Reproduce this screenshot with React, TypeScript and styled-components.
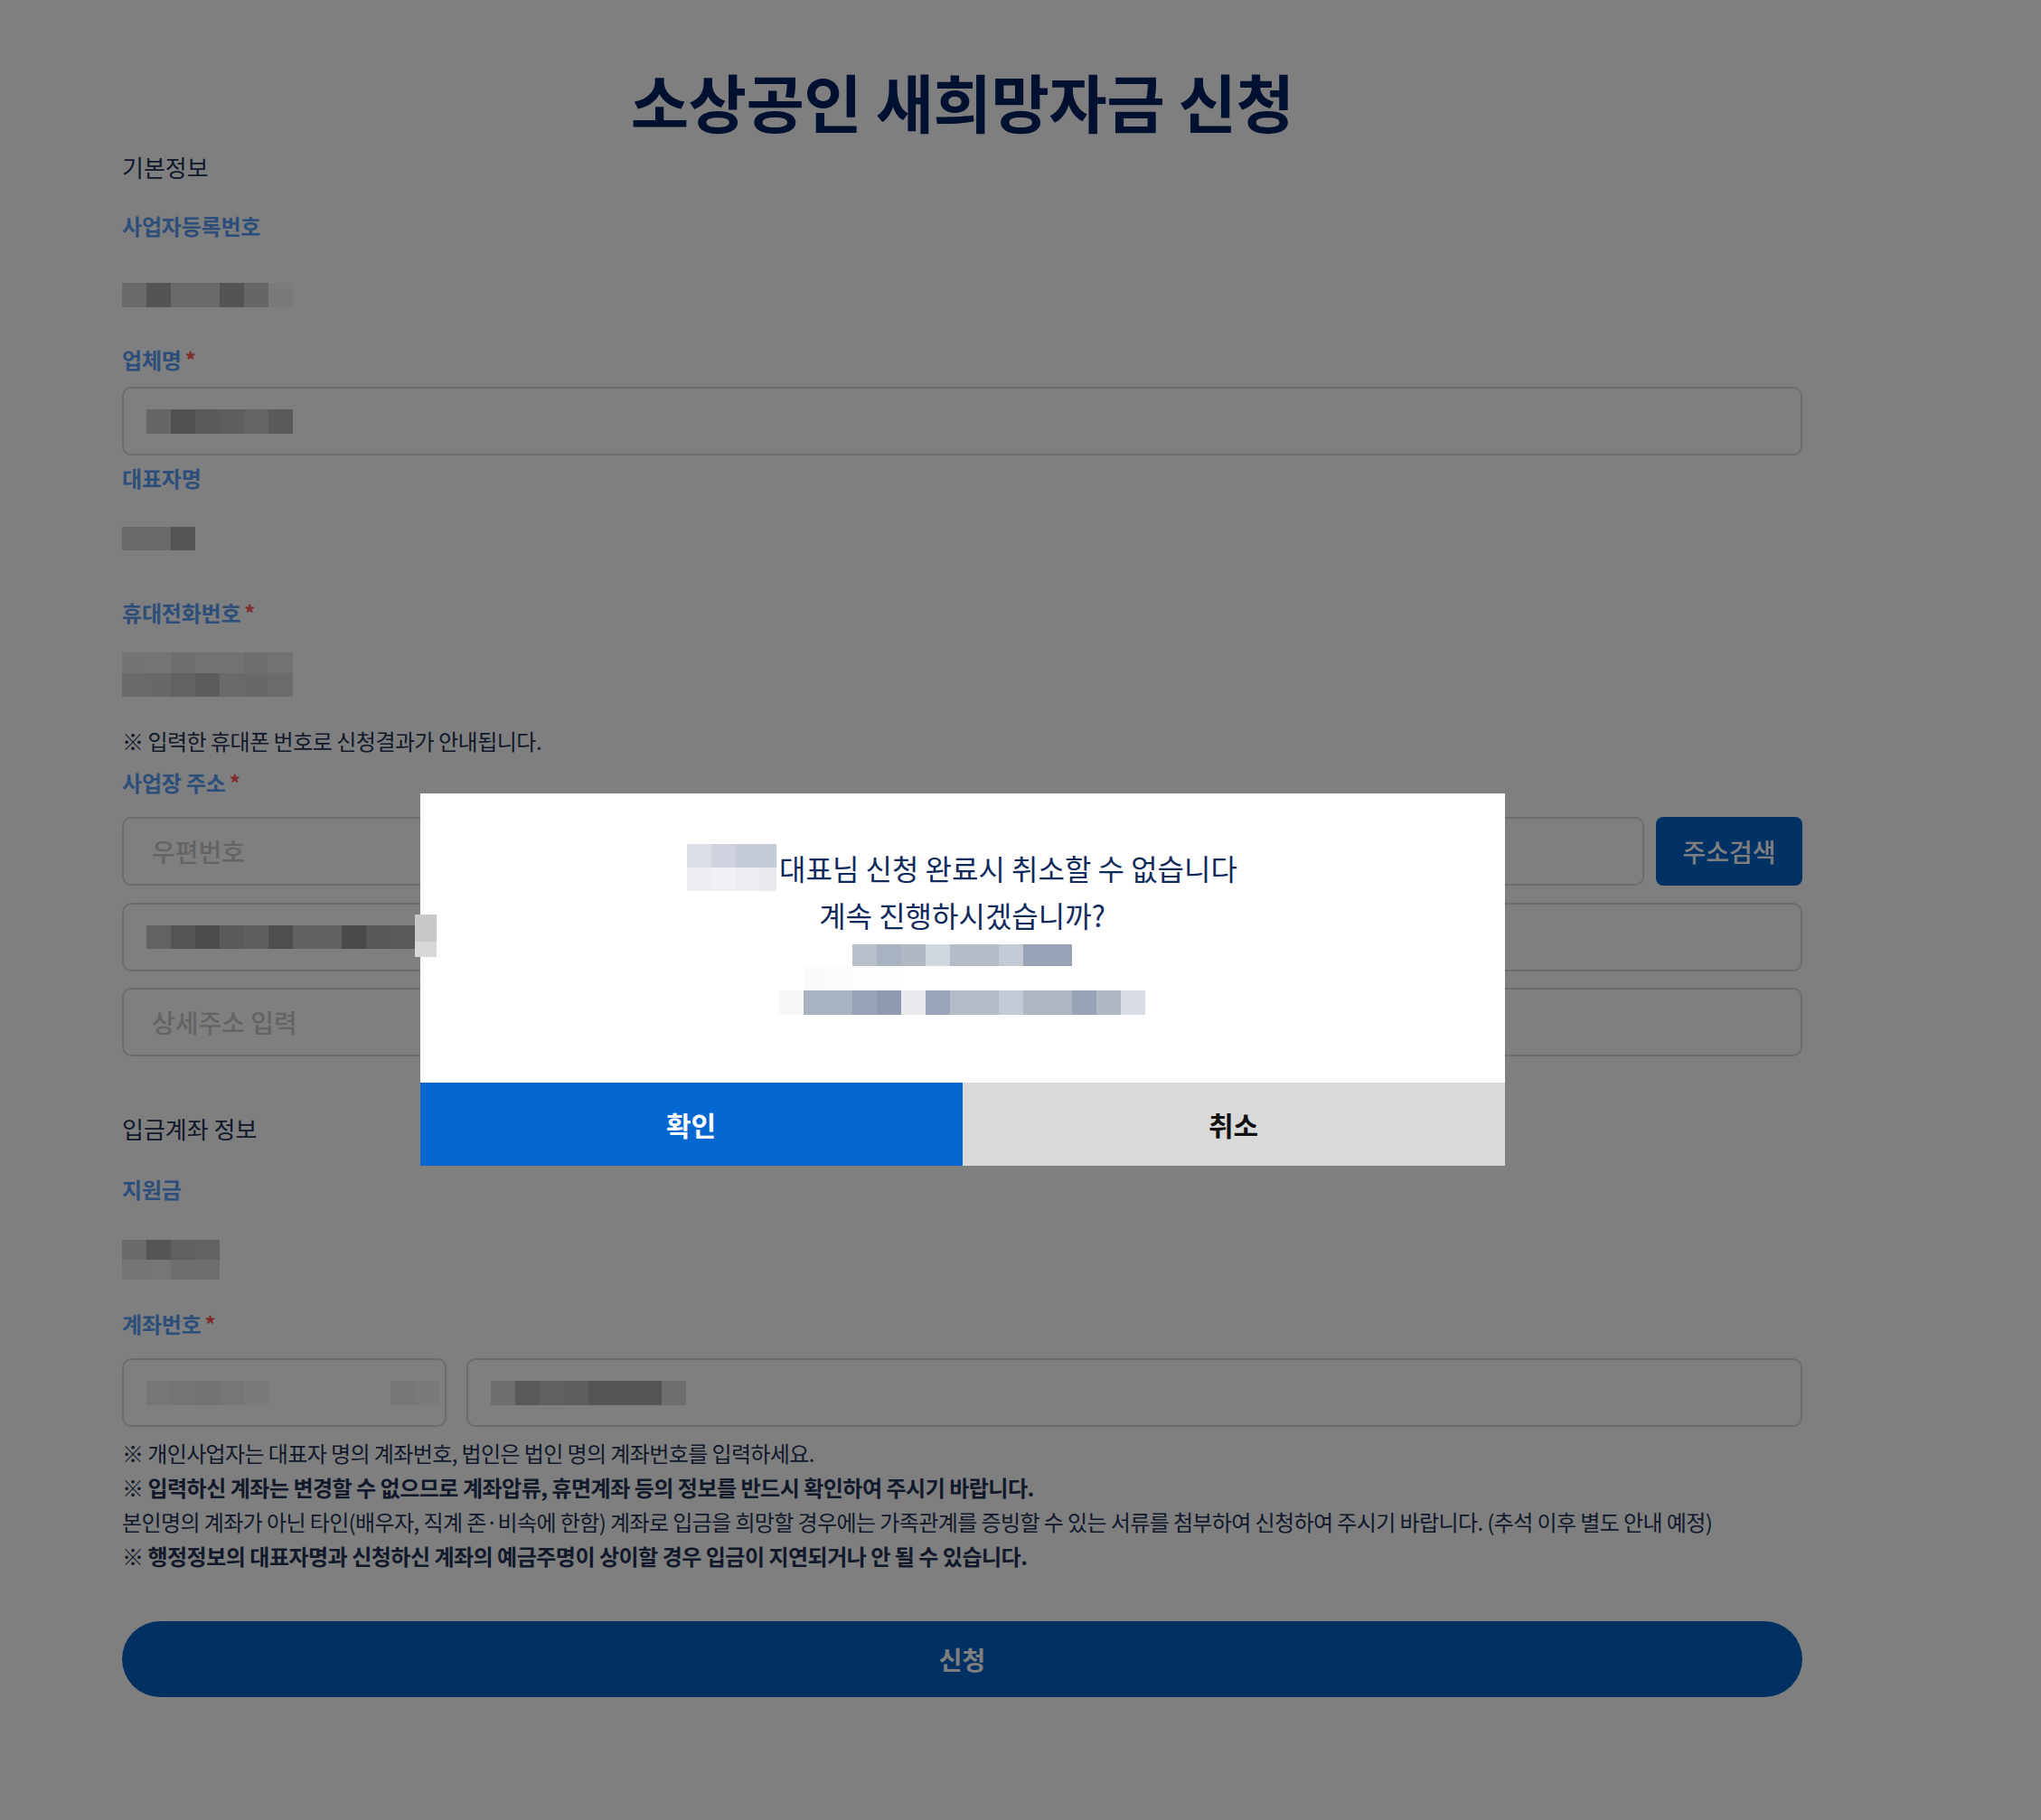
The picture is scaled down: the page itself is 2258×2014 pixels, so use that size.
import React from "react";
import styled, { createGlobalStyle } from "styled-components";

const GlobalStyle = createGlobalStyle`
  html, body {
    margin: 0;
    padding: 0;
  }
  body {
    background: #fff;
    font-family: "Noto Sans CJK KR", "Noto Sans", sans-serif;
    color: #223355;
  }
  * {
    box-sizing: border-box;
  }
`;

// grey level as seen under the 50% dim -> the page colour beneath it
const dim = (v: number) => {
    const c = Math.min(255, v * 2);
    return `rgb(${c}, ${c}, ${c})`;
};

const Page = styled.main`
    width: 2258px;
    min-height: 2014px;
    padding: 70px 0 0 135px;
    background: #fff;
`;

const Form = styled.form`
    width: 1859px;
    display: flex;
    flex-direction: column;
`;

const Title = styled.h1`
    margin: 0;
    text-align: center;
    font-size: 70px;
    line-height: 84px;
    font-weight: 700;
    letter-spacing: -0.5px;
    color: #002060;
`;

const SectionTitle = styled.h2<{ $top: number }>`
    margin: ${p => p.$top}px 0 0;
    font-size: 26px;
    line-height: 34px;
    font-weight: 400;
    letter-spacing: 0;
    color: #223355;
`;

const Label = styled.label<{ $top?: number }>`
    display: block;
    margin-top: ${p => p.$top ?? 0}px;
    font-size: 24px;
    line-height: 34px;
    font-weight: 700;
    letter-spacing: -0.2px;
    color: #5a9cf5;
`;

const Required = styled.span`
    margin-left: 4px;
    color: #ff5555;
`;

const ReadValue = styled.div<{ $pt: number; $pb: number }>`
    padding: ${p => p.$pt}px 0 ${p => p.$pb}px;
    display: flex;
`;

const Hint = styled.p`
    margin: 0;
    font-size: 24px;
    line-height: 34px;
    letter-spacing: -0.5px;
    color: #223355;
`;

const Row = styled.div<{ $top: number; $gap: number }>`
    margin-top: ${p => p.$top}px;
    display: flex;
    gap: ${p => p.$gap}px;
`;

const InputBox = styled.div<{ $top?: number; $width?: number }>`
    margin-top: ${p => p.$top ?? 0}px;
    height: 76px;
    flex: ${p => (p.$width ? `0 0 ${p.$width}px` : "1 1 auto")};
    border: 2px solid #d8d8d8;
    border-radius: 10px;
    display: flex;
    align-items: center;
    padding-left: 25px;
`;

const TextInput = styled.input`
    width: 100%;
    border: 0;
    outline: 0;
    background: transparent;
    padding: 0 0 0 6px;
    font-family: "Noto Sans CJK KR", "Noto Sans", sans-serif;
    font-size: 28px;
    font-weight: 500;
    color: #223355;
    &::placeholder {
        color: #c8c8c8;
    }
`;

const SearchButton = styled.button`
    flex: 0 0 162px;
    height: 76px;
    border: 0;
    border-radius: 8px;
    background: #0064cc;
    color: #fff;
    font-family: "Noto Sans CJK KR", "Noto Sans", sans-serif;
    font-size: 28px;
    font-weight: 500;
`;

const Notes = styled.ul`
    margin: 10px 0 0;
    padding: 0;
    list-style: none;
`;

const Note = styled.li<{ $bold?: boolean }>`
    font-size: 24px;
    line-height: 38px;
    letter-spacing: ${p => (p.$bold ? -0.5 : -0.6)}px;
    font-weight: ${p => (p.$bold ? 700 : 400)};
    color: #223355;
    white-space: nowrap;
`;

const SubmitButton = styled.button`
    margin-top: 53px;
    height: 84px;
    border: 0;
    border-radius: 42px;
    background: #0062c4;
    color: #fff;
    font-family: "Noto Sans CJK KR", "Noto Sans", sans-serif;
    font-size: 28px;
    font-weight: 700;
`;

/* pixelated blocks that hide personal data */
const MosaicGrid = styled.div`
    display: flex;
    flex-direction: column;
    flex: none;
`;

const MosaicRow = styled.div<{ $h: number }>`
    display: flex;
    height: ${p => p.$h}px;
`;

const Tile = styled.span<{ $w: number }>`
    flex: none;
    width: ${p => p.$w}px;
    height: 100%;
`;

type MosaicProps = { rows: { h: number; cells: (string | null)[] }[]; cell?: number[] | number };

const Mosaic = ({ rows, cell = 27 }: MosaicProps) => (
    <MosaicGrid>
        {rows.map((r, i) => (
            <MosaicRow key={i} $h={r.h}>
                {r.cells.map((c, j) => (
                    <Tile
                        key={j}
                        $w={Array.isArray(cell) ? cell[j] : cell}
                        style={{ background: c ?? "transparent" }}
                    />
                ))}
            </MosaicRow>
        ))}
    </MosaicGrid>
);

const greys = (vals: (number | null)[]) => vals.map(v => (v === null ? null : dim(v)));

/* modal */
const Overlay = styled.div`
    position: fixed;
    inset: 0;
    background: rgba(0, 0, 0, 0.5);
    padding: 878px 0 0 135px;
`;

const OverlayColumn = styled.div`
    width: 1859px;
    display: flex;
    justify-content: center;
`;

const Dialog = styled.div`
    position: relative;
    width: 1200px;
    background: #fff;
`;

const CensorMark = styled.div`
    position: absolute;
    left: -6px;
    top: 134px;
    width: 24px;
    display: flex;
    flex-direction: column;
    span:first-child {
        height: 30px;
        background: #c8c8c8;
    }
    span:last-child {
        height: 17px;
        background: #d8d8d8;
    }
`;

const DialogBody = styled.div`
    height: 320px;
    padding-top: 56px;
    display: flex;
    flex-direction: column;
    align-items: center;
`;

const MessageLine = styled.div<{ $h: number; $top?: number }>`
    display: flex;
    align-items: center;
    gap: 3px;
    height: ${p => p.$h}px;
    margin-top: ${p => p.$top ?? 0}px;
    font-size: 32px;
    color: #102a5c;
`;

const MosaicSlot = styled.div`
    margin-top: 11px;
`;

const DialogActions = styled.div`
    display: flex;
    height: 92px;
`;

const DialogButton = styled.button<{ $primary?: boolean }>`
    flex: 1;
    border: 0;
    background: ${p => (p.$primary ? "#0767d0" : "#d9d9d9")};
    color: ${p => (p.$primary ? "#fff" : "#111")};
    font-family: "Noto Sans CJK KR", "Noto Sans", sans-serif;
    font-size: 30px;
    font-weight: 700;
`;

const nameRows = [
    { h: 26, cells: ["#dcdee6", "#cdd2dc", "#c5cbd5", "#c5cbd5"] },
    { h: 26, cells: ["#eeeff3", "#f0f1f4", "#eceef2", "#e8eaee"] },
];

const infoRows = [
    {
        h: 24,
        cells: [null, null, null, "#b8c0cc", "#a8b2c0", "#b0b8c6", "#d0d6de", "#b4bcc8", "#b4bcc8", "#c4cad4", "#98a4b6", "#98a4b6", null, null, null],
    },
    { h: 27, cells: [null, "#fafafc", "#fbfbfd", "#fdfdfe", "#fefefe", null, null, null, null, null, null, null, null, null, null] },
    {
        h: 27,
        cells: ["#f8f8fa", "#a8b2c0", "#a8b2c0", "#98a4b6", "#8e9ab0", "#e8eaee", "#9aa6b8", "#b4bcc8", "#b4bcc8", "#c4cad4", "#aeb6c4", "#aeb6c4", "#98a4b6", "#b0b8c6", "#d8dce4"],
    },
];

export default function App() {
    return (
        <>
            <GlobalStyle />
            <Page>
                <Form onSubmit={e => e.preventDefault()}>
                    <Title>소상공인 새희망자금 신청</Title>

                    <SectionTitle $top={14}>기본정보</SectionTitle>

                    <Label $top={31}>사업자등록번호</Label>
                    <ReadValue $pt={46} $pb={41}>
                        <Mosaic rows={[{ h: 27, cells: greys([0x6a, 0x54, 0x6a, 0x6a, 0x54, 0x66, 0x7a]) }]} />
                    </ReadValue>

                    <Label>
                        업체명<Required>*</Required>
                    </Label>
                    <InputBox $top={13}>
                        <Mosaic rows={[{ h: 27, cells: greys([0x66, 0x50, 0x5a, 0x5e, 0x64, 0x5a]) }]} />
                    </InputBox>

                    <Label $top={8}>대표자명</Label>
                    <ReadValue $pt={37} $pb={52}>
                        <Mosaic rows={[{ h: 26, cells: greys([0x69, 0x69, 0x55]) }]} />
                    </ReadValue>

                    <Label>
                        휴대전화번호<Required>*</Required>
                    </Label>
                    <ReadValue $pt={27} $pb={32}>
                        <Mosaic
                            rows={[
                                { h: 23, cells: greys([0x73, 0x74, 0x6e, 0x72, 0x72, 0x6e, 0x72]) },
                                { h: 26, cells: greys([0x6a, 0x68, 0x62, 0x5c, 0x6a, 0x68, 0x6c]) },
                            ]}
                        />
                    </ReadValue>
                    <Hint>※ 입력한 휴대폰 번호로 신청결과가 안내됩니다.</Hint>

                    <Label $top={12}>
                        사업장 주소<Required>*</Required>
                    </Label>
                    <Row $top={21} $gap={13}>
                        <InputBox>
                            <TextInput placeholder="우편번호" readOnly />
                        </InputBox>
                        <SearchButton type="button">주소검색</SearchButton>
                    </Row>
                    <InputBox $top={19}>
                        <Mosaic
                            rows={[
                                {
                                    h: 26,
                                    cells: greys([0x62, 0x55, 0x4c, 0x5a, 0x5e, 0x4e, 0x61, 0x61, 0x4a, 0x57, 0x5a]),
                                },
                            ]}
                        />
                    </InputBox>
                    <InputBox $top={18}>
                        <TextInput placeholder="상세주소 입력" />
                    </InputBox>

                    <SectionTitle $top={63}>입금계좌 정보</SectionTitle>

                    <Label $top={33}>지원금</Label>
                    <ReadValue $pt={39} $pb={32}>
                        <Mosaic
                            rows={[
                                { h: 22, cells: greys([0x6a, 0x55, 0x60, 0x62]) },
                                { h: 22, cells: greys([0x74, 0x76, 0x6e, 0x6e]) },
                            ]}
                        />
                    </ReadValue>

                    <Label>
                        계좌번호<Required>*</Required>
                    </Label>
                    <Row $top={21} $gap={22}>
                        <InputBox $width={359}>
                            <Mosaic
                                rows={[
                                    {
                                        h: 27,
                                        cells: greys([0x76, 0x74, 0x72, 0x76, 0x7a, null, null, null, null, null, 0x76, 0x7a]),
                                    },
                                ]}
                            />
                        </InputBox>
                        <InputBox>
                            <Mosaic rows={[{ h: 27, cells: greys([0x6e, 0x5a, 0x60, 0x5e, 0x55, 0x55, 0x55, 0x6e]) }]} />
                        </InputBox>
                    </Row>

                    <Notes>
                        <Note>※ 개인사업자는 대표자 명의 계좌번호, 법인은 법인 명의 계좌번호를 입력하세요.</Note>
                        <Note $bold>
                            ※ 입력하신 계좌는 변경할 수 없으므로 계좌압류, 휴면계좌 등의 정보를 반드시 확인하여 주시기
                            바랍니다.
                        </Note>
                        <Note>
                            본인명의 계좌가 아닌 타인(배우자, 직계 존·비속에 한함) 계좌로 입금을 희망할 경우에는
                            가족관계를 증빙할 수 있는 서류를 첨부하여 신청하여 주시기 바랍니다. (추석 이후 별도 안내 예정)
                        </Note>
                        <Note $bold>
                            ※ 행정정보의 대표자명과 신청하신 계좌의 예금주명이 상이할 경우 입금이 지연되거나 안 될 수
                            있습니다.
                        </Note>
                    </Notes>

                    <SubmitButton type="submit">신청</SubmitButton>
                </Form>
            </Page>

            <Overlay>
                <OverlayColumn>
                    <Dialog role="dialog">
                        <CensorMark>
                            <span />
                            <span />
                        </CensorMark>
                        <DialogBody>
                            <MessageLine $h={52}>
                                <Mosaic rows={nameRows} cell={[27, 27, 27, 18]} />
                                <span>대표님 신청 완료시 취소할 수 없습니다</span>
                            </MessageLine>
                            <MessageLine $h={44} $top={4}>
                                계속 진행하시겠습니까?
                            </MessageLine>
                            <MosaicSlot>
                                <Mosaic rows={infoRows} />
                            </MosaicSlot>
                        </DialogBody>
                        <DialogActions>
                            <DialogButton type="button" $primary>
                                확인
                            </DialogButton>
                            <DialogButton type="button">취소</DialogButton>
                        </DialogActions>
                    </Dialog>
                </OverlayColumn>
            </Overlay>
        </>
    );
}
